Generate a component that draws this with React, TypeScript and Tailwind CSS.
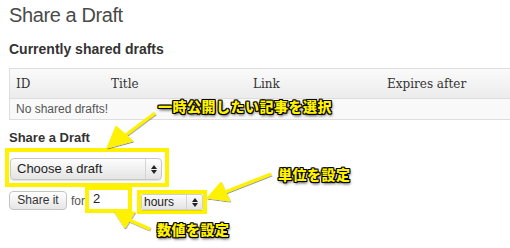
import React from "react";

const SANS = "font-['Liberation_Sans','Noto_Sans_CJK_JP',sans-serif]";

function SelectBox({ label, className }: { label: string; className: string }) {
  return (
    <div
      className={`flex items-stretch rounded-[4px] border border-[#c8c8c8] bg-gradient-to-b from-[#fdfdfd] to-[#e4e4e4] shadow-[0_1px_1px_rgba(0,0,0,0.12)] ${className}`}
    >
      <span className="flex-1 flex items-center pl-[6px] text-[13px] text-[#222]">{label}</span>
      <span className="w-[16px] flex flex-col items-center justify-center border-l border-[#d4d4d4] gap-[1px]">
        <svg width="6" height="4" viewBox="0 0 6 4"><path d="M0 4 L3 0 L6 4 Z" fill="#222" /></svg>
        <svg width="6" height="4" viewBox="0 0 6 4"><path d="M0 0 L3 4 L6 0 Z" fill="#222" /></svg>
      </span>
    </div>
  );
}

function Label({ text, className }: { text: string; className: string }) {
  return (
    <span
      className={`absolute font-['Noto_Sans_CJK_JP',sans-serif] font-black text-[14px] leading-none text-[#fff200] tracking-[0.5px] [text-shadow:1px_1px_0_#000,-1px_-1px_0_#000,1px_-1px_0_#000,-1px_1px_0_#000,0_1px_0_#000,0_-1px_0_#000,1px_0_0_#000,-1px_0_0_#000,1px_2px_3px_rgba(0,0,0,0.8)] ${className}`}
    >
      {text}
    </span>
  );
}

export default function App() {
  return (
    <div className={`relative w-[510px] h-[248px] overflow-hidden bg-white ${SANS}`}>
      <div className="pl-[9px] pt-[3px]">
        <h1 className="text-[20px] leading-[24px] tracking-[-0.4px] text-[#4a4a4a]">Share a Draft</h1>
        <h2 className="mt-[14px] text-[14px] leading-[16px] font-bold text-[#333]">Currently shared drafts</h2>

        {/* table */}
        <div className="mt-[11px] w-[540px] border border-[#dedede]">
          <div className="flex h-[30px] items-center bg-gradient-to-b from-[#fafafa] to-[#ececec] border-b border-[#dcdcdc] font-['DejaVu_Serif',serif] text-[12px] text-[#333]">
            <span className="w-[95px] pl-[6px]">ID</span>
            <span className="w-[142px] pl-[6px]">Title</span>
            <span className="w-[134px] pl-[6px]">Link</span>
            <span className="pl-[6px]">Expires after</span>
          </div>
          <div className="h-[20px] flex items-center pl-[6px] bg-[#f9f9f9] text-[12px] text-[#555]">No shared drafts!</div>
        </div>

        <h3 className="mt-[10px] text-[13px] leading-[15px] font-bold text-[#333]">Share a Draft</h3>

        <div className="mt-[3px] -ml-[4px] w-[164px] h-[39px] border-4 border-[#fff200] pt-[6px] pl-[1px]">
          <SelectBox label="Choose a draft" className="w-[152px] h-[22px]" />
        </div>

        <div className="-mt-[1px] flex items-start">
          <button className="mt-[5px] w-[58px] h-[19px] rounded-[4px] border border-[#c4c4c4] bg-gradient-to-b from-[#ffffff] to-[#e6e6e6] text-[12px] leading-[17px] text-[#333]">
            Share it
          </button>
          <span className="mt-[6px] ml-[4px] text-[12px] text-[#555]">for</span>
          <div className="ml-[0px] w-[47px] h-[27px] border-4 border-[#fff200] bg-white">
            <span className="block pl-[4px] text-[13px] leading-[18px] text-[#222]">2</span>
          </div>
          <div className="ml-[5px] mt-[4px] w-[70px] h-[24px] border-4 border-[#fff200] bg-white">
            <SelectBox label="hours" className="w-[62px] h-[16px] !rounded-[2px] !border-[#d0d0d0] [&>span]:text-[12px] [&>span:first-child]:pl-[2px]" />
          </div>
        </div>
      </div>

      {/* annotations */}
      <svg className="absolute inset-0 pointer-events-none" width="510" height="248" viewBox="0 0 510 248">
        <defs>
          <filter id="sh" x="-20%" y="-20%" width="140%" height="140%">
            <feDropShadow dx="0.5" dy="1" stdDeviation="0.6" floodColor="#000" floodOpacity="0.45" />
          </filter>
        </defs>
        <g fill="#fff200" stroke="#fff200" filter="url(#sh)">
          {/* arrow 1 */}
          <line x1="155" y1="113" x2="123" y2="137" strokeWidth="3" />
          <path d="M107 148 L116 126 L133 141 Z" strokeWidth="1" />
          {/* arrow 2 */}
          <line x1="271" y1="174" x2="225" y2="192" strokeWidth="3" />
          <path d="M207 198 L221 182 L230 201 Z" strokeWidth="1" />
          {/* arrow 3 */}
          <line x1="150" y1="229" x2="127" y2="219" strokeWidth="3" />
          <path d="M114 211 L135 212 L125 228 Z" strokeWidth="1" />
        </g>
      </svg>
      <Label text="一時公開したい記事を選択" className="left-[158px] top-[99px]" />
      <Label text="単位を設定" className="left-[278px] top-[167px]" />
      <Label text="数値を設定" className="left-[157px] top-[222px]" />
    </div>
  );
}
